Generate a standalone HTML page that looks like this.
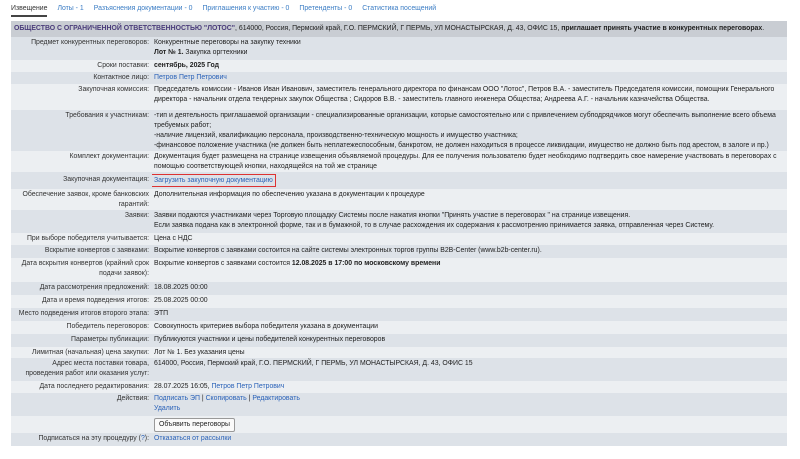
<!DOCTYPE html>
<html><head><meta charset="utf-8"><style>
*{margin:0;padding:0;box-sizing:border-box}
body{width:800px;height:459px;background:#fff;font-family:"Liberation Sans","Noto Sans CJK SC",sans-serif;font-size:6.9px;color:#222;position:relative;overflow:hidden}
a{color:#2a62b8;text-decoration:none}
.tabs{position:absolute;top:3px;left:11px;height:13px;line-height:11px;white-space:nowrap;font-size:6.9px}
.tabs span{display:inline-block;margin-right:10px;color:#3a7cc4}
.tabs span.act{color:#333;border-bottom:2px solid #444;padding-bottom:1px}
table{position:absolute;top:21px;left:11px;width:776px;border-collapse:collapse;table-layout:fixed}
td{line-height:10px;vertical-align:top;padding:1px 2px 0;overflow:hidden}
td.l{text-align:right;padding-right:3px;color:#333}
tr.d{background:#dde2e8}
tr.w{background:#eceff2}
tr.h td{background:#c9cdd3;padding:3px 3px;line-height:10px;white-space:nowrap}
b{font-weight:bold}
.btn{display:inline-block;border:1px solid #999;background:#fafafa;padding:1px 4px;border-radius:2px;line-height:10px;margin-top:1px}
.red{border:1.5px solid #d33;padding:1px 2px;margin-left:-3px;display:inline-block;line-height:9px}
</style></head><body>
<div class="tabs"><span class="act">Извещение</span><span>Лоты - 1</span><span>Разъяснения документации - 0</span><span>Приглашения к участию - 0</span><span>Претенденты - 0</span><span>Статистика посещений</span></div>
<table>
<colgroup><col style="width:141px"><col></colgroup>
<tr class="h" style="height:16px"><td colspan="2"><b style="color:#4a3c7a">ОБЩЕСТВО С ОГРАНИЧЕННОЙ ОТВЕТСТВЕННОСТЬЮ "ЛОТОС"</b>, 614000, Россия, Пермский край, Г.О. ПЕРМСКИЙ, Г ПЕРМЬ, УЛ МОНАСТЫРСКАЯ, Д. 43, ОФИС 15, <b>приглашает принять участие в конкурентных переговорах</b>.</td></tr>
<tr class="d" style="height:23px"><td class="l">Предмет конкурентных переговоров:</td><td>Конкурентные переговоры на закупку техники<br><b>Лот № 1.</b> Закупка оргтехники</td></tr>
<tr class="w" style="height:12px"><td class="l">Сроки поставки:</td><td><b>сентябрь, 2025 Год</b></td></tr>
<tr class="d" style="height:12px"><td class="l">Контактное лицо:</td><td><a>Петров Петр Петрович</a></td></tr>
<tr class="w" style="height:26px"><td class="l">Закупочная комиссия:</td><td>Председатель комиссии - Иванов Иван Иванович, заместитель генерального директора по финансам ООО "Лотос", Петров В.А. - заместитель Председателя комиссии, помощник Генерального директора - начальник отдела тендерных закупок Общества ; Сидоров В.В. - заместитель главного инженера Общества; Андреева А.Г. - начальник казначейства Общества.</td></tr>
<tr class="d" style="height:41px"><td class="l">Требования к участникам:</td><td>-тип и деятельность приглашаемой организации - специализированные организации, которые самостоятельно или с привлечением субподрядчиков могут обеспечить выполнение всего объема требуемых работ;<br>-наличие лицензий, квалификацию персонала, производственно-техническую мощность и имущество участника;<br>-финансовое положение участника (не должен быть неплатежеспособным, банкротом, не должен находиться в процессе ликвидации, имущество не должно быть под арестом, в залоге и пр.)</td></tr>
<tr class="w" style="height:21px"><td class="l">Комплект документации:</td><td>Документация будет размещена на странице извещения объявляемой процедуры. Для ее получения пользователю будет необходимо подтвердить свое намерение участвовать в переговорах с помощью соответствующей кнопки, находящейся на той же странице</td></tr>
<tr class="d" style="height:17px"><td class="l" style="padding-top:3px">Закупочная документация:</td><td style="padding-top:2px"><span class="red"><a>Загрузить закупочную документацию</a></span></td></tr>
<tr class="w" style="height:21px"><td class="l">Обеспечение заявок, кроме банковских гарантий:</td><td>Дополнительная информация по обеспечению указана в документации к процедуре</td></tr>
<tr class="d" style="height:23px"><td class="l">Заявки:</td><td>Заявки подаются участниками через Торговую площадку Системы после нажатия кнопки "Принять участие в переговорах " на странице извещения.<br>Если заявка подана как в электронной форме, так и в бумажной, то в случае расхождения их содержания к рассмотрению принимается заявка, отправленная через Систему.</td></tr>
<tr class="w" style="height:12px"><td class="l">При выборе победителя учитывается:</td><td>Цена с НДС</td></tr>
<tr class="d" style="height:13px"><td class="l">Вскрытие конвертов с заявками:</td><td>Вскрытие конвертов с заявками состоится на сайте системы электронных торгов группы B2B-Center (www.b2b-center.ru).</td></tr>
<tr class="w" style="height:24px"><td class="l">Дата вскрытия конвертов (крайний срок подачи заявок):</td><td>Вскрытие конвертов с заявками состоится <b>12.08.2025 в 17:00 по московскому времени</b></td></tr>
<tr class="d" style="height:13px"><td class="l">Дата рассмотрения предложений:</td><td>18.08.2025 00:00</td></tr>
<tr class="w" style="height:13px"><td class="l">Дата и время подведения итогов:</td><td>25.08.2025 00:00</td></tr>
<tr class="d" style="height:13px"><td class="l">Место подведения итогов второго этапа:</td><td>ЭТП</td></tr>
<tr class="w" style="height:13px"><td class="l">Победитель переговоров:</td><td>Совокупность критериев выбора победителя указана в документации</td></tr>
<tr class="d" style="height:13px"><td class="l">Параметры публикации:</td><td>Публикуются участники и цены победителей конкурентных переговоров</td></tr>
<tr class="w" style="height:11px"><td class="l">Лимитная (начальная) цена закупки:</td><td>Лот № 1. Без указания цены</td></tr>
<tr class="d" style="height:23px"><td class="l">Адрес места поставки товара, проведения работ или оказания услуг:</td><td>614000, Россия, Пермский край, Г.О. ПЕРМСКИЙ, Г ПЕРМЬ, УЛ МОНАСТЫРСКАЯ, Д. 43, ОФИС 15</td></tr>
<tr class="w" style="height:12px"><td class="l">Дата последнего редактирования:</td><td>28.07.2025 16:05, <a>Петров Петр Петрович</a></td></tr>
<tr class="d" style="height:23px"><td class="l">Действия:</td><td><a>Подписать ЭП</a> | <a>Скопировать</a> | <a>Редактировать</a><br><a>Удалить</a></td></tr>
<tr class="w" style="height:17px"><td class="l"></td><td><span class="btn">Объявить переговоры</span></td></tr>
<tr class="d" style="height:13px"><td class="l">Подписаться на эту процедуру (<a>?</a>):</td><td><a>Отказаться от рассылки</a></td></tr>
</table>
</body></html>
